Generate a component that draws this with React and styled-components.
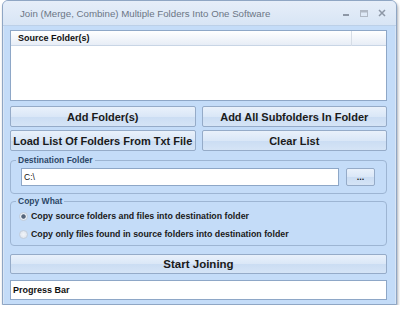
import React from "react";
import styled, { createGlobalStyle } from "styled-components";

const GlobalStyle = createGlobalStyle`
  html, body {
    margin: 0;
    padding: 0;
    background: #ffffff;
    font-family: "Liberation Sans", Arial, sans-serif;
  }
`;

const Window = styled.div`
  width: 395px;
  height: 305px;
  margin-left: 2px;
  box-sizing: border-box;
  border: 1px solid #8fa6c4;
  border-radius: 6px 6px 0 0;
  background: #c4dcf8;
  box-shadow: 1px 2px 3px rgba(60, 70, 90, 0.45);
  display: flex;
  flex-direction: column;
`;

const TitleBar = styled.div`
  height: 24px;
  flex-shrink: 0;
  display: flex;
  align-items: center;
  padding: 0 10px 0 17px;
  background: linear-gradient(#e6eef9, #d8e5f5);
  border-radius: 5px 5px 0 0;
  border-bottom: 1px solid #bcd0e8;
  font-size: 9.7px;
  color: #6b7685;
`;

const Title = styled.div`
  flex: 1;
  padding-top: 1px;
`;

const Caps = styled.div`
  display: flex;
  gap: 10px;
  align-items: center;
`;

const Body = styled.div`
  flex: 1;
  display: flex;
  flex-direction: column;
  padding: 4px 8px 0 6px;
  border-left: 1px solid #d8e5f5;
  border-right: 1px solid #d8e5f5;
`;

const ListBox = styled.div`
  height: 71px;
  box-sizing: border-box;
  border: 1px solid #8ea7c7;
  background: #ffffff;
  display: flex;
  flex-direction: column;
`;

const ListHeader = styled.div`
  height: 14px;
  display: grid;
  grid-template-columns: 1fr 34px;
  background: linear-gradient(#ffffff, #e7edf6);
  border-bottom: 1px solid #c8d5e5;
`;

const HeaderCell = styled.div`
  font-size: 9px;
  font-weight: bold;
  color: #111;
  padding-left: 7px;
  line-height: 15px;
  border-right: ${(p) => (p.$divider ? "1px solid #d6dde6" : "none")};
`;

const ButtonGrid = styled.div`
  display: grid;
  grid-template-columns: 1fr 1fr;
  gap: 3px 6px;
  margin-top: 5px;
`;

const Button = styled.button`
  height: ${(p) => p.$h || 21}px;
  box-sizing: border-box;
  border: 1px solid #95abc8;
  border-radius: 2px;
  background: linear-gradient(#e9f1fb 0%, #dae7f7 50%, #cbddf3 52%, #d5e4f6 100%);
  font-family: "Liberation Sans", Arial, sans-serif;
  font-weight: bold;
  font-size: ${(p) => p.$size || 11}px;
  color: #1a1a1a;
  padding: 0;
  white-space: nowrap;
  overflow: hidden;
`;

const Group = styled.div`
  position: relative;
  margin-top: ${(p) => p.$top}px;
  height: ${(p) => p.$h}px;
  box-sizing: border-box;
  border: 1px solid #9db5d3;
  border-radius: 4px;
  padding: ${(p) => p.$pad}px 11px 0 10px;
`;

const Legend = styled.span`
  position: absolute;
  top: -6px;
  left: 5px;
  padding: 0 2px;
  background: #c4dcf8;
  font-size: 8.5px;
  line-height: 10px;
  font-weight: bold;
  color: #2c4767;
`;

const DestRow = styled.div`
  display: flex;
  align-items: center;
  gap: 7px;
`;

const TextBox = styled.div`
  flex: 1;
  height: 18px;
  box-sizing: border-box;
  border: 1px solid #8ea7c7;
  background: #fff;
  font-size: 8.5px;
  line-height: 16px;
  padding-left: 2px;
  color: #111;
`;

const BrowseButton = styled(Button)`
  width: 29px;
  font-size: 9px;
  line-height: 10px;
`;

const RadioRow = styled.label`
  display: flex;
  align-items: center;
  gap: 3px;
  height: 18px;
  font-size: 8.8px;
  font-weight: bold;
  color: #1a1a1a;
  margin-left: -2px;
`;

const RadioDot = styled.span`
  width: 9px;
  height: 9px;
  border-radius: 50%;
  box-sizing: border-box;
  border: 1px solid #c3cedb;
  background: ${(p) =>
    p.$on
      ? "radial-gradient(circle, #55657a 0 1.8px, #e9eef5 2.6px)"
      : "radial-gradient(circle, #f1f4f8 0, #d9e1ec 100%)"};
`;

const StartButton = styled(Button)`
  margin-top: 8px;
  width: 100%;
  font-size: 11.5px;
`;

const ProgressBox = styled.div`
  margin-top: 6px;
  height: 20px;
  box-sizing: border-box;
  border: 1px solid #8ea7c7;
  background: #fff;
  font-size: 9px;
  font-weight: bold;
  color: #111;
  line-height: 18px;
  padding-left: 2px;
`;

export default function App() {
  return (
    <>
      <GlobalStyle />
      <Window>
        <TitleBar>
          <Title>Join (Merge, Combine) Multiple Folders Into One Software</Title>
          <Caps>
            <svg width="8" height="8" viewBox="0 0 8 8">
              <rect x="1" y="5" width="6" height="2" fill="#8d97a6" />
            </svg>
            <svg width="8" height="8" viewBox="0 0 8 8">
              <rect x="0.5" y="1.5" width="7" height="6" fill="none" stroke="#b0b8c4" />
              <rect x="0.5" y="1.5" width="7" height="2" fill="#b0b8c4" />
            </svg>
            <svg width="8" height="8" viewBox="0 0 8 8">
              <path d="M1 1 L7 7 M7 1 L1 7" stroke="#8d97a6" strokeWidth="1.5" />
            </svg>
          </Caps>
        </TitleBar>
        <Body>
          <ListBox>
            <ListHeader>
              <HeaderCell $divider>Source Folder(s)</HeaderCell>
              <HeaderCell />
            </ListHeader>
          </ListBox>
          <ButtonGrid>
            <Button>Add Folder(s)</Button>
            <Button>Add All Subfolders In Folder</Button>
            <Button>Load List Of Folders From Txt File</Button>
            <Button>Clear List</Button>
          </ButtonGrid>
          <Group $top={9} $h={34} $pad={7}>
            <Legend>Destination Folder</Legend>
            <DestRow>
              <TextBox>C:\</TextBox>
              <BrowseButton $h={18}>...</BrowseButton>
            </DestRow>
          </Group>
          <Group $top={7} $h={45} $pad={5}>
            <Legend>Copy What</Legend>
            <RadioRow>
              <RadioDot $on />
              Copy source folders and files into destination folder
            </RadioRow>
            <RadioRow>
              <RadioDot />
              Copy only files found in source folders into destination folder
            </RadioRow>
          </Group>
          <StartButton $h={20}>Start Joining</StartButton>
          <ProgressBox>Progress Bar</ProgressBox>
        </Body>
      </Window>
    </>
  );
}
